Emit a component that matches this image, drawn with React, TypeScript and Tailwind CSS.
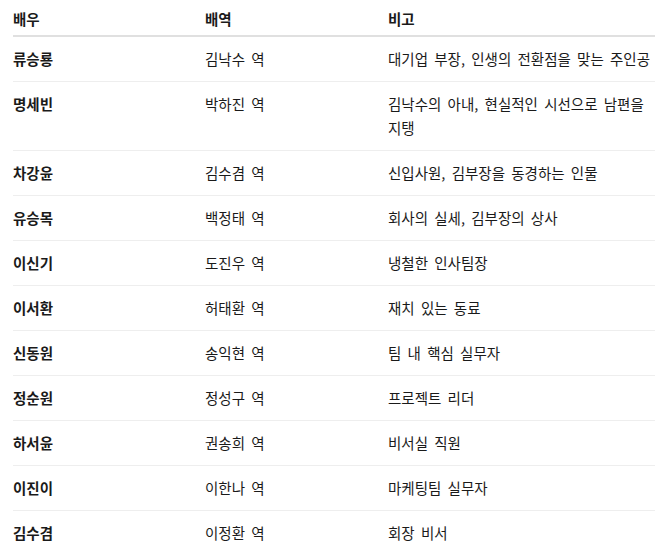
const rows = [
  ['류승룡', '김낙수 역', '대기업 부장, 인생의 전환점을 맞는 주인공'],
  ['명세빈', '박하진 역', '김낙수의 아내, 현실적인 시선으로 남편을 지탱'],
  ['차강윤', '김수겸 역', '신입사원, 김부장을 동경하는 인물'],
  ['유승목', '백정태 역', '회사의 실세, 김부장의 상사'],
  ['이신기', '도진우 역', '냉철한 인사팀장'],
  ['이서환', '허태환 역', '재치 있는 동료'],
  ['신동원', '송익현 역', '팀 내 핵심 실무자'],
  ['정순원', '정성구 역', '프로젝트 리더'],
  ['하서윤', '권송희 역', '비서실 직원'],
  ['이진이', '이한나 역', '마케팅팀 실무자'],
  ['김수겸', '이정환 역', '회장 비서'],
];

export default function App() {
  return (
    <div className="w-[658px] h-[552px] overflow-hidden bg-white pl-[13px] font-['Noto_Sans_CJK_KR','Noto_Sans',sans-serif] text-[14.5px] [word-spacing:3px] text-[#1a1a1a]">
      <table className="table-fixed w-[642px] border-collapse">
        <colgroup>
          <col className="w-[192px]" />
          <col className="w-[183px]" />
          <col />
        </colgroup>
        <thead>
          <tr className="border-b-2 border-[#e0e0e0]">
            <th className="text-left font-bold leading-6 pt-[7px] pb-1 pr-2">배우</th>
            <th className="text-left font-bold leading-6 pt-[7px] pb-1 pr-2">배역</th>
            <th className="text-left font-bold leading-6 pt-[7px] pb-1">비고</th>
          </tr>
        </thead>
        <tbody>
          {rows.map((r, i) => (
            <tr key={i} className="border-b border-[#eeeeee]">
              <td className="align-top font-bold leading-6 py-[10px] pr-2">{r[0]}</td>
              <td className="align-top leading-6 py-[10px] pr-2">{r[1]}</td>
              <td className="align-top leading-6 py-[10px]">{r[2]}</td>
            </tr>
          ))}
        </tbody>
      </table>
    </div>
  );
}
